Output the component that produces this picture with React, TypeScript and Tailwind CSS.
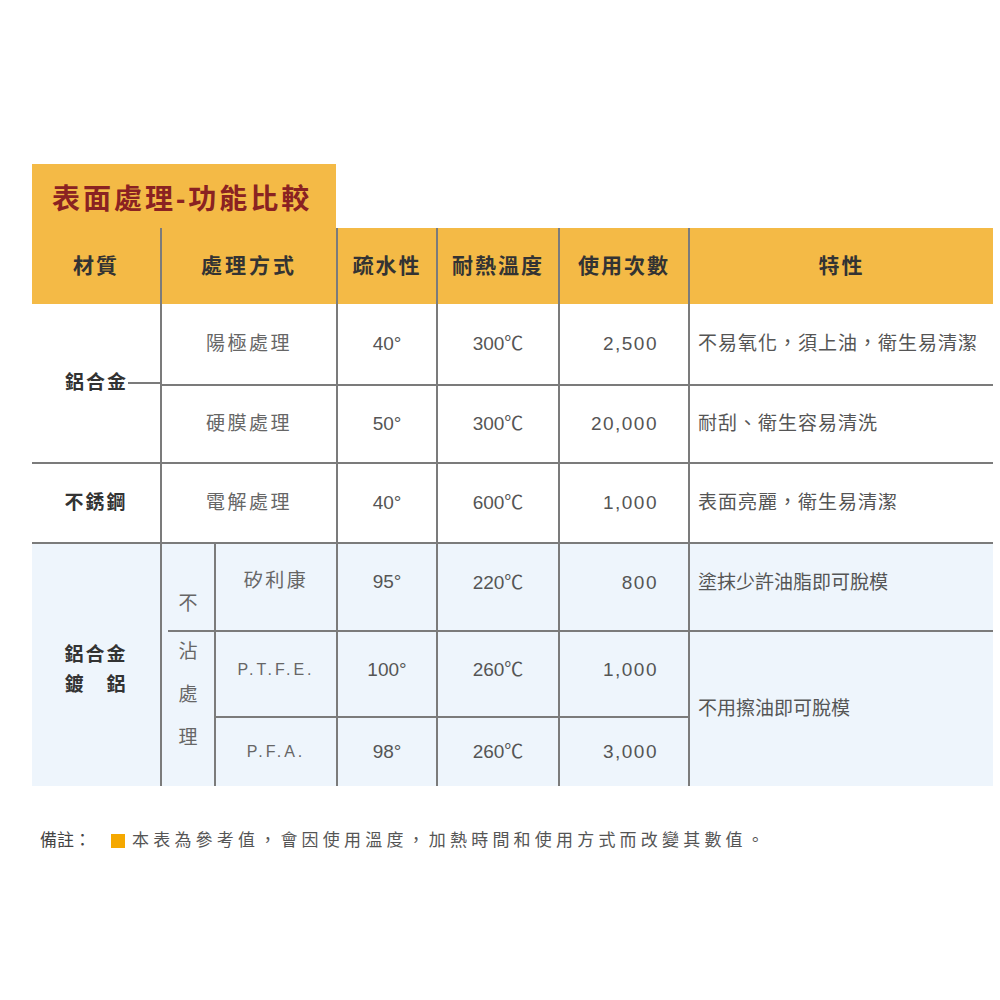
const font = { fontFamily: '"Liberation Sans", "Noto Sans CJK TC", sans-serif' };

const line = "border-[#7b7b7b]";

type Row = {
  method: string;
  water: string;
  heat: string;
  uses: string;
  note: string;
};

const topRows: Row[] = [
  { method: "陽極處理", water: "40°", heat: "300℃", uses: "2,500", note: "不易氧化，須上油，衛生易清潔" },
  { method: "硬膜處理", water: "50°", heat: "300℃", uses: "20,000", note: "耐刮、衛生容易清洗" },
];

export default function App() {
  return (
    <div className="min-h-[1000px] bg-white pt-[164px] pl-[32px]" style={font}>
      {/* title tab */}
      <div className="flex h-[64px] w-[304px] items-center bg-[#f4ba46] pl-[20px] pt-[8px]">
        <h1 className="text-[28px] font-bold tracking-[3px] text-[#8a2222]">表面處理-功能比較</h1>
      </div>

      <div className="grid w-[961px] grid-cols-[128px_54px_122px_100px_122px_130px_305px] grid-rows-[76px_80px_78px_80px_88px_86px_70px] text-[19px] text-[#555]">
        {/* header */}
        <div className="flex items-center justify-center bg-[#f4ba46] text-[21px] font-bold tracking-[2px] text-[#333]">材質</div>
        <div className={`col-span-2 flex items-center justify-center border-l-2 ${line} bg-[#f4ba46] text-[21px] font-bold tracking-[3px] text-[#333]`}>處理方式</div>
        <div className={`flex items-center justify-center border-l-2 ${line} bg-[#f4ba46] text-[21px] font-bold tracking-[2px] text-[#333]`}>疏水性</div>
        <div className={`flex items-center justify-center border-l-2 ${line} bg-[#f4ba46] text-[21px] font-bold tracking-[2px] text-[#333]`}>耐熱溫度</div>
        <div className={`flex items-center justify-center border-l-2 ${line} bg-[#f4ba46] text-[21px] font-bold tracking-[2px] text-[#333]`}>使用次數</div>
        <div className={`flex items-center justify-center border-l-2 ${line} bg-[#f4ba46] text-[21px] font-bold tracking-[2px] text-[#333]`}>特性</div>

        {/* 鋁合金 merged cell */}
        <div className="row-span-2 flex items-center pl-[33px]">
          <span className="text-[19px] font-bold tracking-[2px] text-[#333]">鋁合金</span>
          <div className="h-[2px] flex-1 bg-[#7b7b7b]" />
        </div>

        {topRows.map((r, i) => (
          <div key={r.method} className="contents">
            <div className={`col-span-2 flex items-center justify-center border-l-2 ${line} ${i ? "border-t-2" : ""} tracking-[2.5px] text-[#666]`}>{r.method}</div>
            <div className={`flex items-center justify-center border-l-2 ${line} ${i ? "border-t-2" : ""}`}>{r.water}</div>
            <div className={`flex items-center justify-center border-l-2 ${line} ${i ? "border-t-2" : ""}`}>{r.heat}</div>
            <div className={`flex items-center justify-end border-l-2 ${line} ${i ? "border-t-2" : ""} pr-[30px] tracking-[1.5px]`}>{r.uses}</div>
            <div className={`flex items-center border-l-2 ${line} ${i ? "border-t-2" : ""} pl-[8px] tracking-[1px]`}>{r.note}</div>
          </div>
        ))}

        {/* 不銹鋼 */}
        <div className={`flex items-center justify-center border-t-2 ${line} font-bold tracking-[2px] text-[#333]`}>不銹鋼</div>
        <div className={`col-span-2 flex items-center justify-center border-l-2 border-t-2 ${line} tracking-[2.5px] text-[#666]`}>電解處理</div>
        <div className={`flex items-center justify-center border-l-2 border-t-2 ${line}`}>40°</div>
        <div className={`flex items-center justify-center border-l-2 border-t-2 ${line}`}>600℃</div>
        <div className={`flex items-center justify-end border-l-2 border-t-2 ${line} pr-[30px] tracking-[1.5px]`}>1,000</div>
        <div className={`flex items-center border-l-2 border-t-2 ${line} pl-[8px] tracking-[1px]`}>表面亮麗，衛生易清潔</div>

        {/* 鋁合金鍍鋁 */}
        <div className={`row-span-3 flex flex-col items-center justify-center border-t-2 ${line} bg-[#eef5fc] pt-[10px] font-bold leading-[30px] tracking-[2px] text-[#333]`}>
          <span>鋁合金</span>
          <span>鍍　鋁</span>
        </div>
        <div className={`flex items-end justify-center border-l-2 border-t-2 ${line} bg-[#eef5fc] pb-[12px] text-[#666]`}>不</div>
        <div className={`flex items-center justify-center border-l-2 border-t-2 ${line} bg-[#eef5fc] pb-[12px] tracking-[2.5px] text-[#666]`}>矽利康</div>
        <div className={`flex items-center justify-center border-l-2 border-t-2 ${line} bg-[#eef5fc] pb-[10px]`}>95°</div>
        <div className={`flex items-center justify-center border-l-2 border-t-2 ${line} bg-[#eef5fc] pb-[8px]`}>220℃</div>
        <div className={`flex items-center justify-end border-l-2 border-t-2 ${line} bg-[#eef5fc] pb-[8px] pr-[30px] tracking-[1.5px]`}>800</div>
        <div className={`flex items-center border-l-2 border-t-2 ${line} bg-[#eef5fc] pb-[8px] pl-[8px]`}>塗抹少許油脂即可脫模</div>

        <div className={`row-span-2 flex flex-col border-l-2 ${line} bg-[#eef5fc] text-[#666]`}>
          <div className="ml-[6px] h-[2px] bg-[#7b7b7b]" />
          <div className="-mt-[2px] flex flex-col items-center leading-[43px]">
            <span>沾</span>
            <span>處</span>
            <span>理</span>
          </div>
        </div>
        <div className={`flex items-center justify-center border-l-2 border-t-2 ${line} bg-[#eef5fc] pb-[8px] text-[16px] tracking-[3px] text-[#666]`}>P.T.F.E.</div>
        <div className={`flex items-center justify-center border-l-2 border-t-2 ${line} bg-[#eef5fc] pb-[8px]`}>100°</div>
        <div className={`flex items-center justify-center border-l-2 border-t-2 ${line} bg-[#eef5fc] pb-[8px]`}>260℃</div>
        <div className={`flex items-center justify-end border-l-2 border-t-2 ${line} bg-[#eef5fc] pb-[8px] pr-[30px] tracking-[1.5px]`}>1,000</div>
        <div className={`row-span-2 flex items-center border-l-2 border-t-2 ${line} bg-[#eef5fc] pl-[8px]`}>不用擦油即可脫模</div>

        <div className={`flex items-center justify-center border-l-2 border-t-2 ${line} bg-[#eef5fc] text-[16px] tracking-[3px] text-[#666]`}>P.F.A.</div>
        <div className={`flex items-center justify-center border-l-2 border-t-2 ${line} bg-[#eef5fc]`}>98°</div>
        <div className={`flex items-center justify-center border-l-2 border-t-2 ${line} bg-[#eef5fc]`}>260℃</div>
        <div className={`flex items-center justify-end border-l-2 border-t-2 ${line} bg-[#eef5fc] pr-[30px] tracking-[1.5px]`}>3,000</div>
      </div>

      {/* note */}
      <div className="mt-[42px] flex items-center pl-[8px] text-[17px] text-[#555]">
        <span className="text-[#444]">備註：</span>
        <span className="ml-[20px] mr-[7px] h-[14px] w-[14px] bg-[#f5a800]" />
        <span className="tracking-[4.2px]">本表為參考值，會因使用溫度，加熱時間和使用方式而改變其數值。</span>
      </div>
    </div>
  );
}
